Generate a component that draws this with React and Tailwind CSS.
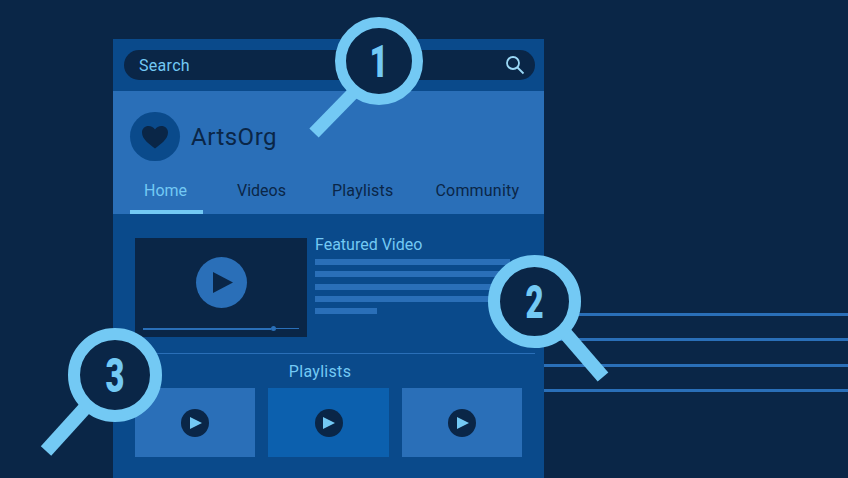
import React from "react";

const font = { fontFamily: '"Roboto", "Liberation Sans", sans-serif' };

function Magnifier({ cx, cy, r, sw, hx1, hy1, hx2, hy2, hw, n, fs, sx }) {
  return (
    <g>
      <line x1={hx1} y1={hy1} x2={hx2} y2={hy2} stroke="#73c9f4" strokeWidth={hw} />
      <circle cx={cx} cy={cy} r={r} fill="#0a2647" stroke="#73c9f4" strokeWidth={sw} />
      <text
        x={0}
        y={0}
        transform={`translate(${cx} ${cy + fs * 0.355}) scale(${sx} 1)`}
        textAnchor="middle"
        fontSize={fs}
        fontWeight="900"
        fill="#73c9f4"
        fontFamily="Roboto, sans-serif"
      >
        {n}
      </text>
    </g>
  );
}

function Play({ big }) {
  return big ? (
    <div className="flex h-[51px] w-[51px] items-center justify-center rounded-full bg-[#2a6fb8]">
      <svg width="20" height="21" viewBox="0 0 20 21" className="ml-[3px]">
        <path d="M0 0L20 10.5L0 21Z" fill="#0a2647" />
      </svg>
    </div>
  ) : (
    <div className="flex h-[28px] w-[28px] items-center justify-center rounded-full bg-[#0a2647]">
      <svg width="12" height="12" viewBox="0 0 12 12" className="ml-[1px]">
        <path d="M0 0L12 6L0 12Z" fill="#73c9f4" />
      </svg>
    </div>
  );
}

export default function App() {
  return (
    <div className="relative flex h-[478px] w-[848px] overflow-hidden bg-[#0a2647]" style={font}>
      <div className="ml-[113px] mt-[39px] flex h-[439px] w-[431px] flex-col bg-[#0a4a8b]">
        <div className="flex h-[52px] shrink-0 items-center pl-[11px] pr-[9px]">
          <div className="flex h-[30px] w-full items-center justify-between rounded-full bg-[#0a2647] pl-[15px] pr-[10px]">
            <span className="translate-y-[1px] text-[16px] tracking-[0.3px] text-[#73c9f4]">Search</span>
            <svg width="20" height="20" viewBox="0 0 20 20" fill="none" stroke="#9bd8f6" strokeWidth="1.8">
              <circle cx="8" cy="8" r="6" />
              <path d="M12.5 12.5L18.5 18.5" />
            </svg>
          </div>
        </div>
        <div className="flex h-[123px] shrink-0 flex-col bg-[#2a6fb8]">
          <div className="ml-[17px] mt-[21px] flex items-center gap-[11px]">
            <div className="flex h-[49px] w-[50px] items-center justify-center rounded-full bg-[#0a4a8b]">
              <svg width="28" height="24" viewBox="0 0 28 24">
                <path d="M14 23.5C9 19.5 1 14.5 1 7.5C1 3.5 4 1 7.5 1C10.3 1 12.6 2.4 14 4.6C15.4 2.4 17.7 1 20.5 1C24 1 27 3.5 27 7.5C27 14.5 19 19.5 14 23.5Z" fill="#0a2647" />
              </svg>
            </div>
            <span className="text-[24px] leading-none tracking-[0.5px] text-[#0a2647]">ArtsOrg</span>
          </div>
          <div className="ml-[17px] mt-auto flex text-[16px] text-[#0a2647]">
            <div className="h-[41px] w-[73px] border-b-[4px] border-[#73c9f4] pt-[6px] pr-[2px] text-center text-[#73c9f4]">Home</div>
            <div className="ml-[34px] pt-[6px]">Videos</div>
            <div className="ml-[46px] pt-[6px] tracking-[0.2px]">Playlists</div>
            <div className="ml-[42px] pt-[6px] tracking-[0.2px]">Community</div>
          </div>
        </div>
        <div className="flex flex-col pl-[22px] pr-[22px]">
          <div className="mt-[24px] flex gap-[8px]">
            <div className="flex h-[99px] w-[172px] shrink-0 flex-col items-center bg-[#0a2647] px-[8px]">
              <div className="mt-[19px]">
                <Play big />
              </div>
              <div className="mt-[18px] flex w-full items-center">
                <div className="h-[2px] w-[128px] bg-[#2a6fb8]" />
                <div className="h-[5px] w-[5px] rounded-full bg-[#2a6fb8]" />
                <div className="h-px flex-1 bg-[#2a6fb8]" />
              </div>
            </div>
            <div className="flex flex-1 flex-col">
              <div className="h-[13px] -translate-y-[1px] whitespace-nowrap text-[16px] leading-[16px] text-[#73c9f4]">Featured Video</div>
              <div className="mt-[8px] flex flex-col gap-[6.3px]">
                <div className="h-[6px] w-[195px] bg-[#2a6fb8]" />
                <div className="h-[6px] w-[195px] bg-[#2a6fb8]" />
                <div className="h-[6px] w-[195px] bg-[#2a6fb8]" />
                <div className="h-[6px] w-[195px] bg-[#2a6fb8]" />
                <div className="h-[6px] w-[62px] bg-[#2a6fb8]" />
              </div>
            </div>
          </div>
          <div className="-mr-[13px] mt-[16px] h-px bg-[#2a6fb8]" />
          <div className="mt-[9px] pr-[17px] text-center text-[16px] leading-[18px] tracking-[0.3px] text-[#73c9f4]">Playlists</div>
          <div className="mt-[7px] flex gap-[13px]">
            <div className="flex h-[69px] w-[120px] items-center justify-center bg-[#2a6fb8]"><Play /></div>
            <div className="flex h-[69px] w-[121px] items-center justify-center bg-[#0c60ae]"><Play /></div>
            <div className="flex h-[69px] w-[120px] items-center justify-center bg-[#2a6fb8]"><Play /></div>
          </div>
        </div>
      </div>
      <div className="flex flex-1 flex-col gap-[22.3px] pt-[313px]">
        <div className="h-[3px] bg-[#2a6fb8]" />
        <div className="h-[3px] bg-[#2a6fb8]" />
        <div className="h-[3px] bg-[#2a6fb8]" />
        <div className="h-[3px] bg-[#2a6fb8]" />
      </div>
      <svg className="absolute left-0 top-0" width="848" height="478" viewBox="0 0 848 478">
        <Magnifier cx={379} cy={61} r={38.5} sw={11} hx1={355} hy1={91} hx2={314} hy2={133} hw={13} n="1" fs={45} sx={0.72} />
        <Magnifier cx={534.5} cy={301.5} r={40.5} sw={12} hx1={565} hy1={333} hx2={603} hy2={377} hw={14} n="2" fs={46} sx={0.68} />
        <Magnifier cx={115} cy={375} r={41} sw={12} hx1={85} hy1={408} hx2={46} hy2={451} hw={14} n="3" fs={48} sx={0.68} />
      </svg>
    </div>
  );
}
